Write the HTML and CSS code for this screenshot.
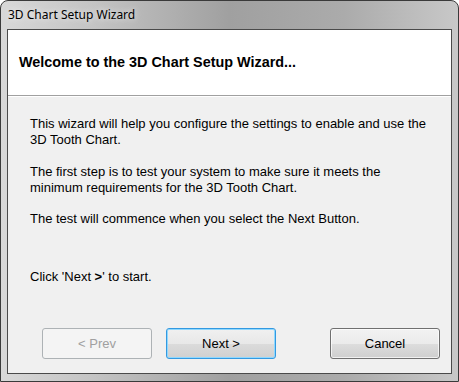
FILE: index.html
```html
<html>
	<head>
		<link rel="stylesheet" href="styles.css">
	</head>
	<body>
		<div class="window">
			<div class="titlebar">3D Chart Setup Wizard</div>
			<div class="client">
				<div class="header">
					<span class="header-title">Welcome to the 3D Chart Setup Wizard...</span>
				</div>
				<div class="content">
					<p>This wizard will help you configure the settings to enable and use the 3D Tooth Chart.</p>
					<p>The first step is to test your system to make sure it meets the minimum requirements for the 3D Tooth Chart.</p>
					<p>The test will commence when you select the Next Button.</p>
					<p class="start">Click 'Next <b>&gt;</b>' to start.</p>
					<div class="buttons">
						<div class="btn disabled">&lt; Prev</div>
						<div class="btn default">Next &gt;</div>
						<div class="btn cancel">Cancel</div>
					</div>
				</div>
			</div>
		</div>
	</body>
</html>
```

FILE: styles.css
```css
body {
	margin: 0;
	background: #ffffff;
	font-family: "Liberation Sans", Arial, sans-serif;
	font-size: 13px;
	color: #000;
}

.window {
	width: 459px;
	height: 382px;
	box-sizing: border-box;
	padding: 0 7px 7px 7px;
	border: 1px solid #3a3a3a;
	border-radius: 8px 8px 0 0;
	background: linear-gradient(90deg, #d8d8d8 0%, #c4c4c4 20%, #a0a0a0 50%, #ababab 75%, #c8c8c8 100%);
	display: flex;
	flex-direction: column;
}

.titlebar {
	height: 28px;
	line-height: 28px;
	font-family: "Noto Sans", "Open Sans", sans-serif;
	font-size: 12px;
	color: #000;
	text-shadow: 0 0 6px rgba(255, 255, 255, 0.9);
}

.client {
	flex: 1;
	border: 1px solid #4a4a4a;
	background: #f0f0f0;
	display: flex;
	flex-direction: column;
	margin: 0 -1px 0 -1px;
}

.header {
	height: 66px;
	background: #ffffff;
	border-bottom: 1px solid #a0a0a0;
	box-sizing: border-box;
	padding: 24px 0 0 11px;
	line-height: 16px;
}

.header-title {
	font-weight: bold;
	font-size: 14.4px;
}

.content {
	flex: 1;
	display: flex;
	flex-direction: column;
	padding: 19px 11px 14px 22px;
	border-top: 1px solid #ffffff;
}

.content p {
	margin: 0 7px 15.5px 0;
	line-height: 16px;
}

.content .start {
	margin-top: 26px;
}

.buttons {
	margin-top: auto;
	display: flex;
	padding-left: 12px;
}

.btn {
	width: 110px;
	height: 31px;
	box-sizing: border-box;
	line-height: 29px;
	text-align: center;
	border-radius: 3px;
	border: 1px solid #707070;
	background: linear-gradient(#f2f2f2 0%, #ebebeb 50%, #dddddd 51%, #cfcfcf 100%);
	box-shadow: inset 0 0 0 1px rgba(255, 255, 255, 0.7);
}

.btn.disabled {
	color: #a0a0a0;
	border-color: #adb2b5;
	background: #f4f4f4;
	box-shadow: none;
}

.btn.default {
	margin-left: 14px;
	border-color: #3399e0;
	box-shadow: inset 0 0 0 1px #8fd8ff;
	background: linear-gradient(#f0f0f0 0%, #e8e8e8 50%, #dbdbdb 51%, #d0d0d0 100%);
}

.btn.cancel {
	margin-left: auto;
}
```
